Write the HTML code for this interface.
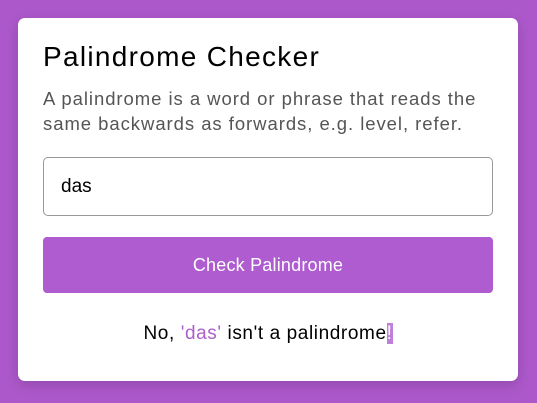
<!DOCTYPE html>
<html><head><style>
body{margin:0;width:537px;height:403px;background:#ac58ca;font-family:"Liberation Sans",sans-serif;position:relative;overflow:hidden}
.card{position:absolute;left:18px;top:18px;width:500px;height:363px;background:#fff;border-radius:7px;box-shadow:0 4px 12px rgba(0,0,0,.15)}
h1{position:absolute;left:25px;top:23px;margin:0;font-size:28px;font-weight:normal;color:#000;letter-spacing:1.3px}
p{position:absolute;left:25px;top:68px;margin:0;width:460px;font-size:18.5px;line-height:25px;color:#555;letter-spacing:.95px;white-space:nowrap}
.inp{position:absolute;left:25px;top:139px;border:1px solid #999;border-radius:5px;font-size:19px;line-height:57px;padding-left:17px;box-sizing:border-box;width:450px;height:59px}
.btn{position:absolute;left:25px;top:219px;width:450px;height:56px;background:#ae5ccf;border-radius:4px;color:#fff;font-size:18px;text-align:center;line-height:56px;letter-spacing:.2px}
.res{position:absolute;left:0;width:500px;top:305px;text-align:center;font-size:19px;color:#000;letter-spacing:.6px}
.res span{color:#ad5fcb}.res b{font-weight:normal;background:#c17fdd;color:#fff}
</style></head><body>
<div class="card">
<h1>Palindrome Checker</h1>
<p>A palindrome is a word or phrase that reads the<br>same backwards as forwards, e.g. level, refer.</p>
<div class="inp">das</div>
<div class="btn">Check Palindrome</div>
<div class="res">No, <span>'das'</span> isn't a palindrome<b>!</b></div>
</div>
</body></html>
